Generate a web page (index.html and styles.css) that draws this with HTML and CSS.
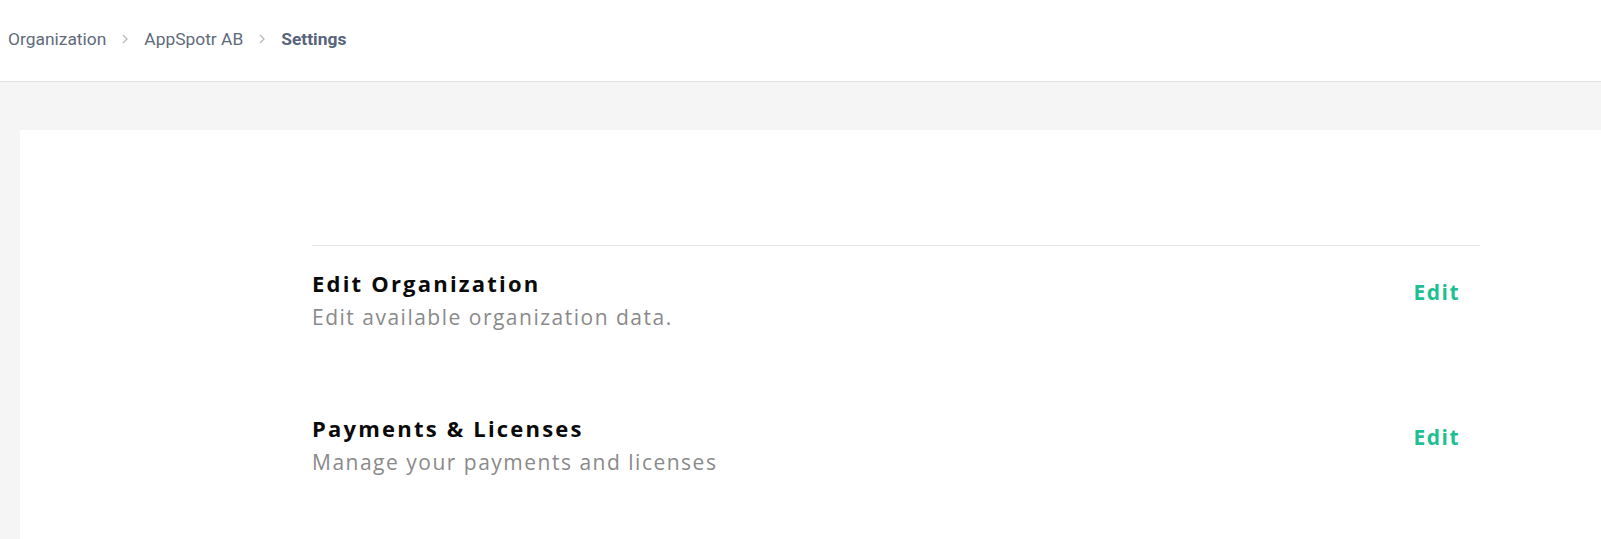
FILE: index.html
```html
<!DOCTYPE html>
<html>
<head>
<meta charset="utf-8">
<link rel="stylesheet" href="styles.css">
</head>
<body>
<header class="topbar">
  <nav class="crumbs">
    <span class="crumb">Organization</span>
    <svg class="chev" width="6" height="10" viewBox="0 0 6 10"><path d="M1 1l4 4-4 4" fill="none" stroke="#b4b9c2" stroke-width="1.3"/></svg>
    <span class="crumb">AppSpotr AB</span>
    <svg class="chev" width="6" height="10" viewBox="0 0 6 10"><path d="M1 1l4 4-4 4" fill="none" stroke="#b4b9c2" stroke-width="1.3"/></svg>
    <span class="crumb current">Settings</span>
  </nav>
</header>
<main class="page">
  <section class="card">
    <div class="list">
      <div class="row">
        <div class="info">
          <div class="title">Edit Organization</div>
          <div class="desc">Edit available organization data.</div>
        </div>
        <a class="edit">Edit</a>
      </div>
      <div class="row">
        <div class="info">
          <div class="title">Payments &amp; Licenses</div>
          <div class="desc">Manage your payments and licenses</div>
        </div>
        <a class="edit">Edit</a>
      </div>
    </div>
  </section>
</main>
</body>
</html>
```
FILE: styles.css
```css
html, body {
  margin: 0;
  padding: 0;
  background: #f5f5f5;
  height: 100%;
  overflow: hidden;
}
.topbar {
  background: #ffffff;
  border-bottom: 1px solid #e2e2e2;
  display: flex;
  align-items: center;
  padding-left: 8px;
  box-sizing: border-box;
  height: 82px;
}
.crumbs {
  display: flex;
  align-items: center;
  gap: 16px;
  font-family: Roboto, "Liberation Sans", sans-serif;
  font-size: 17.4px;
  color: #5f6a7b;
  margin-top: -4px;
}
.crumb.current {
  font-weight: 700;
  color: #58647a;
}
.chev {
  display: block;
  margin-top: 1px;
}
.page {
  padding: 48px 0 0 20px;
}
.card {
  background: #ffffff;
  padding: 115px 0 0 292px;
  height: 600px;
}
.list {
  width: 1168px;
  border-top: 1px solid #e4e5ee;
}
.row {
  display: flex;
  justify-content: space-between;
  align-items: flex-start;
  padding: 22px 20px 0 0;
  height: 145px;
  box-sizing: border-box;
  font-family: "Open Sans", sans-serif;
}
.title {
  font-size: 22px;
  font-weight: 700;
  letter-spacing: 2.2px;
  line-height: 30px;
  color: #0a0a0a;
}
.desc {
  font-size: 21px;
  letter-spacing: 1.5px;
  line-height: 30px;
  margin-top: 4px;
  color: #8a8a8a;
}
.edit {
  font-size: 21px;
  font-weight: 700;
  letter-spacing: 1.5px;
  line-height: 30px;
  color: #1fbf94;
  margin-top: 9px;
  cursor: pointer;
}
```
